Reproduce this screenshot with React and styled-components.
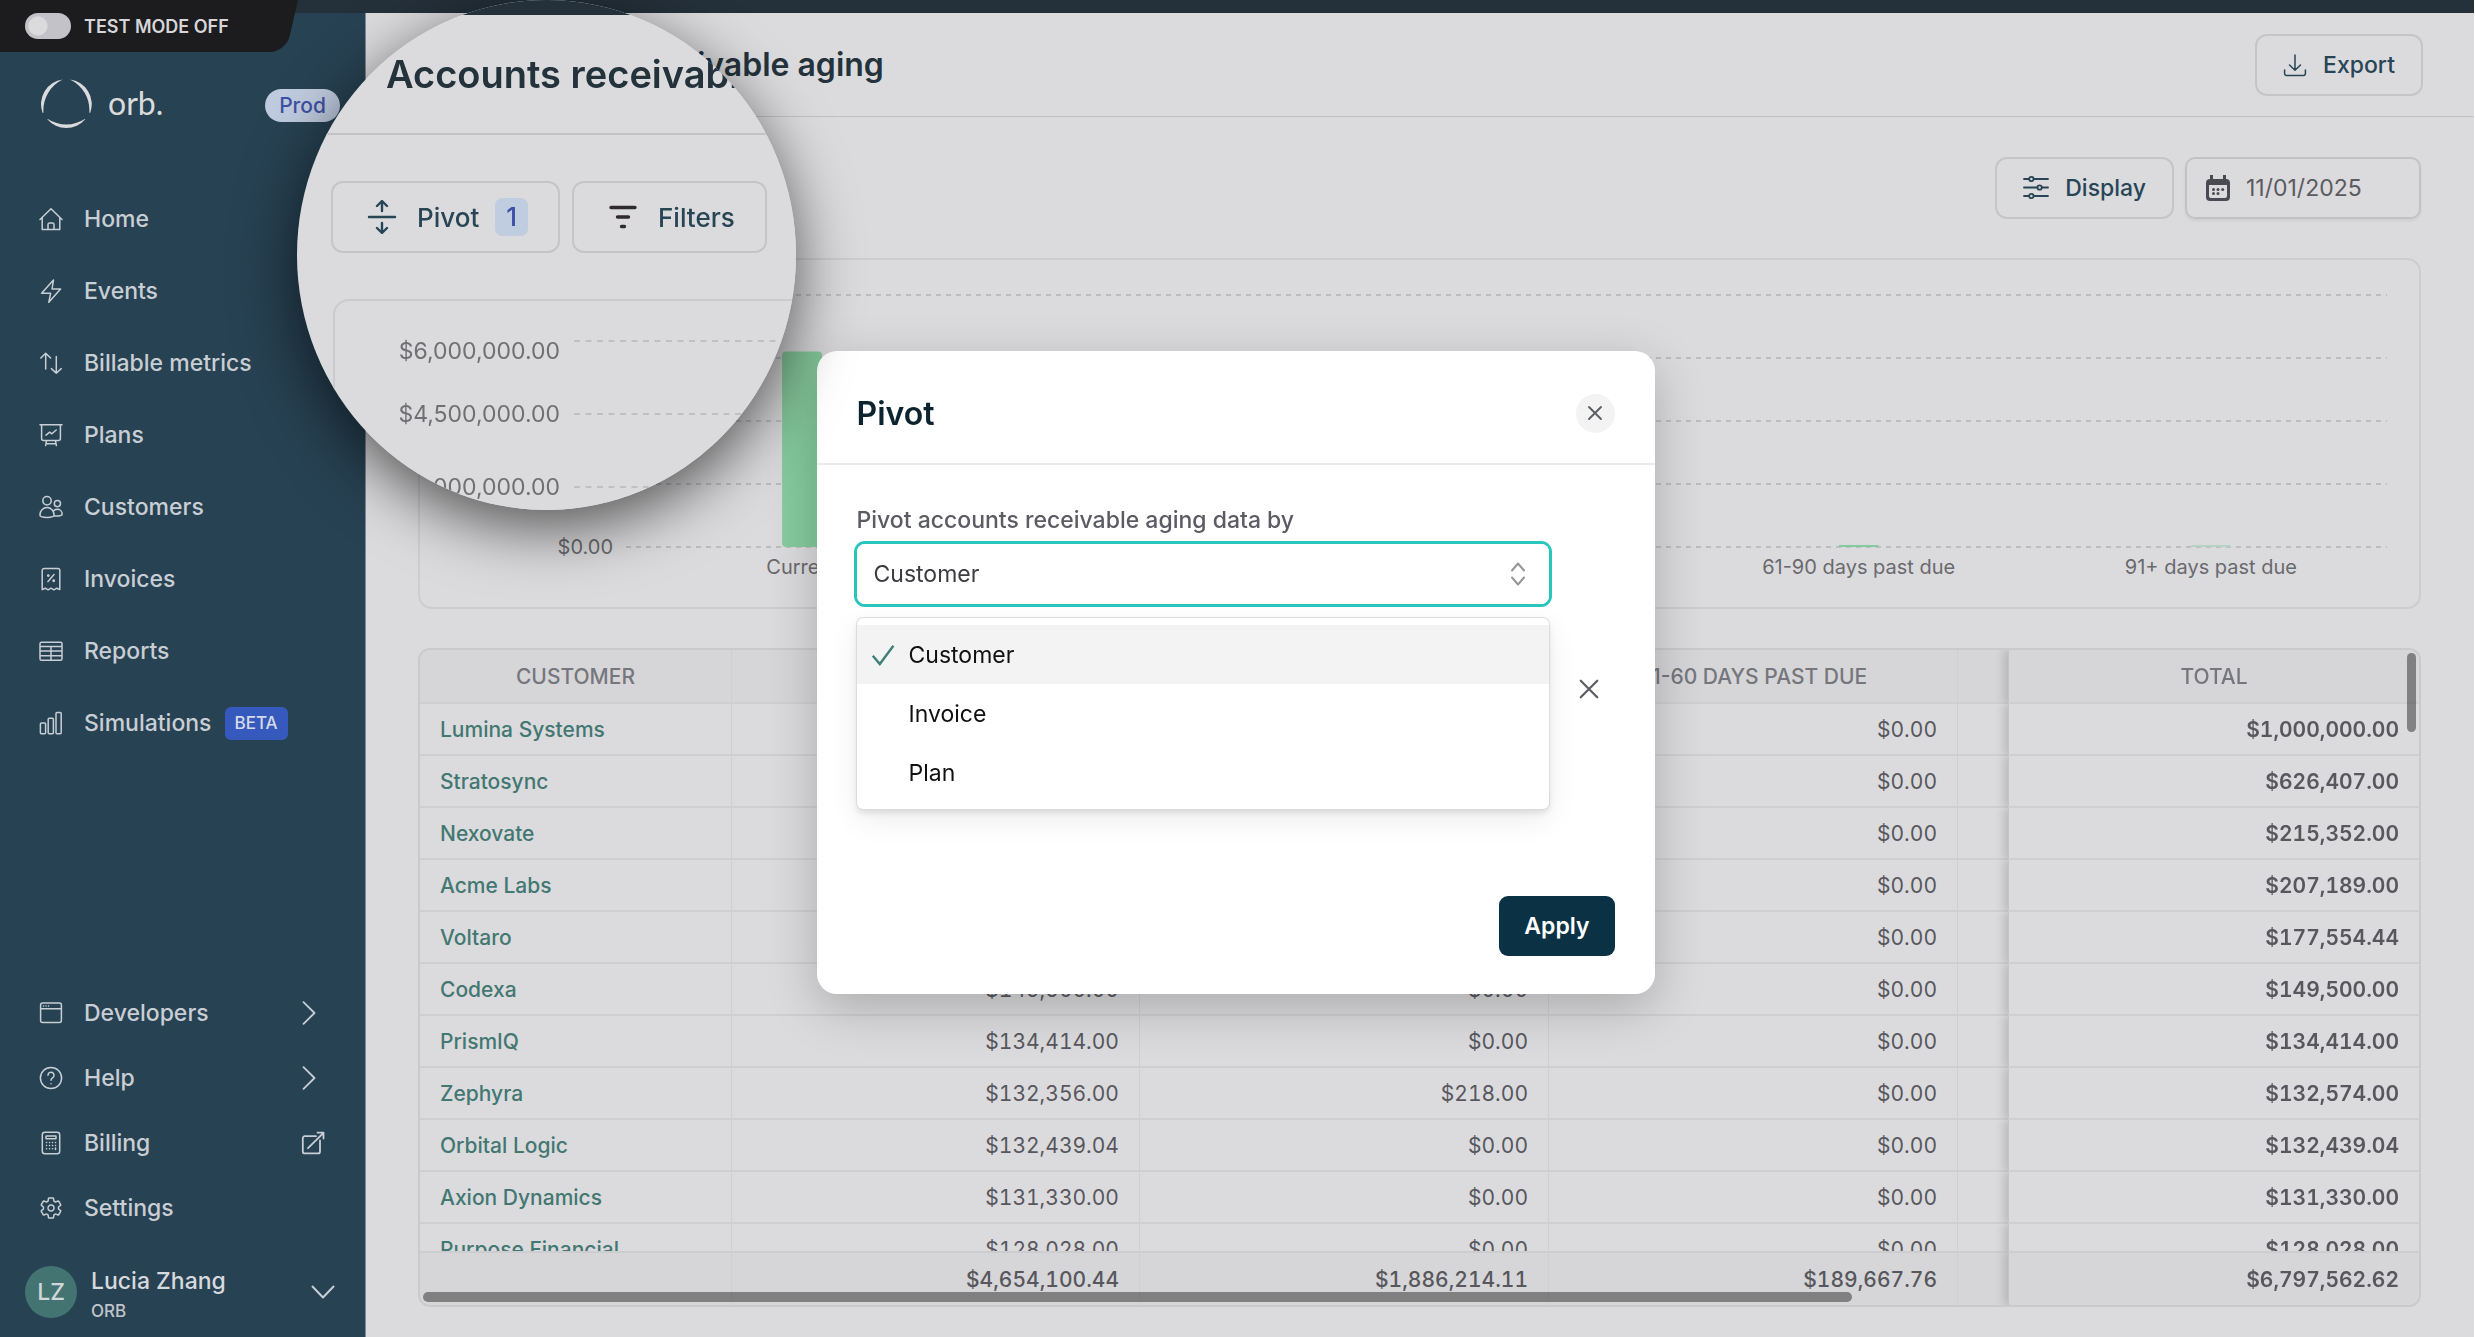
import React from 'react';
import styled, { createGlobalStyle } from 'styled-components';
import { IoSettingsOutline } from 'react-icons/io5';

const GlobalStyle = createGlobalStyle`
    * {
        box-sizing: border-box;
    }
    body {
        margin: 0;
        background: #ffffff;
        font-family: Inter, "Liberation Sans", sans-serif;
        font-size: 23px;
    }
    button, input, select {
        font: inherit;
        color: inherit;
        margin: 0;
    }
    a {
        color: inherit;
        text-decoration: none;
    }
`

const Page = styled.div`
    position: relative;
    display: flex;
    flex-direction: column;
    height: 100vh;
    padding-right: 1px;
    overflow: hidden;
`

const TopStrip = styled.div`
    height: 13px;
    flex: none;
    background: #24303a;
`

const Body = styled.div`
    display: flex;
    flex: 1;
    min-height: 0;
`

/* ---------- sidebar ---------- */

const Sidebar = styled.aside`
    display: flex;
    flex-direction: column;
    width: 366px;
    flex: none;
    padding: 66px 0 11px;
    background: #274253;
    border-right: 1px solid #7f8b95;
    color: #c9ced4;
`

const TestMode = styled.label`
    position: absolute;
    top: 0;
    left: 0;
    z-index: 1;
    display: flex;
    align-items: center;
    gap: 13px;
    width: 298px;
    height: 52px;
    padding-left: 25px;
    overflow: hidden;
    color: #d6d6d9;
    font-size: 18px;
    font-weight: 600;
    &::before {
        content: "";
        position: absolute;
        inset: 0;
        z-index: -1;
        background: #1c1c1f;
        border-bottom-right-radius: 16px;
        transform: skewX(-13deg);
        transform-origin: top right;
        margin-left: -20px;
    }
`

const Toggle = styled.input`
    appearance: none;
    width: 46px;
    height: 26px;
    border-radius: 13px;
    background: radial-gradient(circle at 13px 13px, #dbdbdd 9px, #c2c2c8 10px);
`

const LogoRow = styled.div`
    display: flex;
    align-items: center;
    justify-content: space-between;
    height: 52px;
    padding: 0 25px 0 41px;
`

const Logo = styled.a`
    display: flex;
    align-items: center;
    gap: 15px;
    color: #dbdbdd;
    font-family: Lato, sans-serif;
    font-size: 32px;
    line-height: 40px;
    span {
        padding-bottom: 4px;
    }
`

const Prod = styled.span`
    padding: 0 14px;
    border-radius: 17px;
    background: #bfcbdf;
    color: #3f51a5;
    font-size: 21px;
    line-height: 33px;
    font-weight: 500;
`

const Nav = styled.nav`
    margin-top: ${props => props.$bottom ? 'auto' : '52px'};
`

const NavItem = styled.a`
    display: flex;
    align-items: center;
    height: ${props => props.$compact ? '65px' : '72px'};
    padding: 0 40px 0 39px;
    font-weight: 500;
    svg {
        flex: none;
    }
`

const NavText = styled.span`
    flex: ${props => props.$grow ? 1 : 'none'};
    margin-left: 21px;
`

const Beta = styled.span`
    margin-left: 13px;
    padding: 0 10px;
    border-radius: 6px;
    background: #3659bd;
    color: #d6dae6;
    font-size: 17px;
    line-height: 33px;
    font-weight: 500;
`

const User = styled.button`
    display: flex;
    align-items: center;
    gap: 14px;
    margin-top: 18px;
    padding: 0 30px 0 25px;
    border: 0;
    background: none;
    text-align: left;
`

const Avatar = styled.span`
    width: 52px;
    height: 52px;
    flex: none;
    border-radius: 50%;
    background: #447472;
    color: #d0d6d9;
    font-size: 23px;
    line-height: 52px;
    font-weight: 500;
    text-align: center;
`

const UserText = styled.span`
    display: flex;
    flex: 1;
    flex-direction: column;
    padding-top: 8px;
    color: #d6d9dd;
    font-weight: 500;
    line-height: 30px;
    small {
        color: #c0c6cc;
        font-size: 17px;
    }
`

/* ---------- main area ---------- */

const Main = styled.main`
    display: flex;
    flex: 1;
    flex-direction: column;
    min-width: 0;
    background: #dbdbdd;
`

const Header = styled.header`
    display: flex;
    align-items: center;
    justify-content: space-between;
    height: 104px;
    flex: none;
    padding: 0 51px 0 107px;
    border-bottom: 1px solid #c0c0c3;
`

const Title = styled.h1`
    margin: 0;
    color: #24323c;
    font-size: 32px;
    font-weight: 600;
`

const Content = styled.div`
    display: flex;
    flex: 1;
    flex-direction: column;
    gap: 39px;
    min-height: 0;
    padding: 40px 53px 30px 52px;
`

const Toolbar = styled.div`
    display: flex;
    align-items: center;
    gap: 11px;
`

const Spacer = styled.span`
    flex: 1;
`

const ToolButton = styled.button`
    display: flex;
    align-items: center;
    gap: ${props => props.$big ? '20px' : '16px'};
    height: ${props => props.$big ? '72px' : '62px'};
    padding: ${props => props.$big ? '0 30px 0 34px' : '0 26px'};
    border: 2px solid #c5c5c8;
    border-radius: 12px;
    background: none;
    color: #284556;
    font-size: ${props => props.$big ? '26px' : '23px'};
    font-weight: 500;
`

const Count = styled.span`
    margin-left: -4px;
    padding: 0 11px;
    border-radius: 7px;
    background: #c0cce0;
    color: #3c50a8;
    line-height: 38px;
`

const DateBox = styled.label`
    display: flex;
    align-items: center;
    gap: 15px;
    width: 236px;
    height: 62px;
    padding: 0 18px;
    border: 2px solid #c2c2c5;
    border-radius: 10px;
    box-shadow: 0 2px 3px rgba(0, 0, 0, 0.06);
    color: #4a4a52;
    svg {
        flex: none;
    }
    input {
        width: 100%;
        min-width: 0;
        padding: 0;
        border: 0;
        outline: 0;
        background: none;
        color: #5a5a60;
    }
`

const ChartCard = styled.section`
    display: flex;
    height: 351px;
    flex: none;
    gap: 13px;
    padding: 34px 32px 0 20px;
    border: 2px solid #cdcdd0;
    border-radius: 14px;
    color: #6a6a6e;
    font-size: 20px;
`

const YAxis = styled.div`
    display: flex;
    flex-direction: column;
    justify-content: space-between;
    width: 173px;
    height: 276px;
    margin-top: -11px;
    line-height: 24px;
    text-align: right;
`

const Plot = styled.div`
    flex: 1;
    min-width: 0;
    svg {
        display: block;
        width: 100%;
        height: 254px;
    }
`

const XAxis = styled.div`
    display: grid;
    grid-template-columns: repeat(5, 1fr);
    margin-top: 7px;
    line-height: 24px;
    text-align: center;
`

const TableCard = styled.section`
    position: relative;
    flex: 1;
    min-height: 0;
    border: 2px solid #cacacd;
    border-radius: 12px;
    overflow: hidden;
`

const Scroller = styled.div`
    height: 100%;
    overflow: auto;
    scrollbar-width: none;
`

const Thumb = styled.span`
    position: absolute;
    border-radius: 5px;
    background: rgba(70, 70, 72, 0.6);
    z-index: 3;
    ${props => props.$vertical
        ? 'top: 3px; right: 3px; width: 9px; height: 79px;'
        : 'left: 3px; bottom: 3px; width: 71.5%; height: 10px;'}
`

const Table = styled.table`
    width: 2767px;
    table-layout: fixed;
    border-collapse: separate;
    border-spacing: 0;
    font-size: 21px;
    font-variant-numeric: tabular-nums;
    color: #57575d;
    th, td {
        height: 52px;
        padding: 0 20px;
        border-right: 1px solid #cecfd1;
        border-bottom: 2px solid #cfcfd2;
        text-align: right;
        white-space: nowrap;
    }
    th {
        font-weight: 500;
    }
    thead th {
        position: sticky;
        top: 0;
        z-index: 1;
        height: 54px;
        background: #d6d6d8;
        color: #76767d;
        font-variant-numeric: normal;
        text-align: center;
    }
    tbody th {
        text-align: left;
        color: #437772;
    }
    tfoot td {
        position: sticky;
        bottom: 0;
        z-index: 1;
        height: 54px;
        border-top: 2px solid #cdcdd0;
        border-bottom: 0;
        background: #d6d6d8;
        font-weight: 500;
    }
    tr > :last-child {
        position: sticky;
        right: 0;
        border-right: 0;
        border-left: 1px solid #c4c4c7;
        background: #dbdbdd;
        box-shadow: -4px 0 9px rgba(0, 0, 0, 0.16);
        clip-path: inset(0 0 0 -14px);
        font-weight: 600;
    }
    thead tr > :last-child, tfoot tr > :last-child {
        z-index: 2;
        background: #d6d6d8;
    }
    thead tr > :last-child {
        font-weight: 500;
    }
`

/* ---------- magnifier ---------- */

const Lens = styled.div`
    position: absolute;
    top: 0;
    left: 297px;
    z-index: 20;
    width: 499px;
    height: 510px;
    border-radius: 50%;
    overflow: hidden;
    background: #dbdbdd;
`

const LensShadow = styled(Lens)`
    background: none;
    box-shadow: 0 18px 62px rgba(0, 0, 0, 0.62);
`

const LensStrip = styled.div`
    height: 15px;
    background: #24303a;
`

const LensHeader = styled.div`
    display: flex;
    align-items: center;
    height: 120px;
    padding-left: 89px;
    border-bottom: 2px solid #c3c3c6;
    color: #24323c;
    font-size: 38px;
    font-weight: 600;
    white-space: nowrap;
`

const LensToolbar = styled.div`
    display: flex;
    gap: 12px;
    padding: 46px 30px 46px 34px;
`

const LensCard = styled.div`
    display: grid;
    grid-template-columns: 225px 1fr;
    column-gap: 14px;
    width: 600px;
    height: 400px;
    margin-left: 36px;
    padding-top: 37px;
    border: 2px solid #cbcbce;
    border-radius: 16px;
    color: #707074;
    text-align: right;
`

const LensAxis = styled.div`
    display: grid;
    grid-template-rows: 63px 73px 40px;
    align-items: start;
    line-height: 26px;
`

/* ---------- modal ---------- */

const Overlay = styled.div`
    position: fixed;
    inset: 0;
    z-index: 10;
    display: grid;
    place-items: center;
    padding: 8px 4px 0 0;
`

const Modal = styled.div`
    width: 838px;
    border-radius: 20px;
    background: #ffffff;
    box-shadow: 0 14px 50px rgba(0, 0, 0, 0.22);
`

const ModalHeader = styled.div`
    display: flex;
    align-items: center;
    justify-content: space-between;
    height: 114px;
    padding: 12px 40px 0;
    border-bottom: 2px solid #ebebec;
    h2 {
        margin: 0;
        color: #0c2330;
        font-size: 32px;
        font-weight: 600;
    }
`

const IconButton = styled.button`
    display: grid;
    place-items: center;
    width: 39px;
    height: 39px;
    padding: 0;
    border: 0;
    border-radius: 50%;
    background: ${props => props.$filled ? '#f3f3f3' : 'none'};
    color: #5c5c64;
`

const ModalBody = styled.div`
    padding: 42px 40px 38px;
`

const PivotRow = styled.div`
    display: flex;
    align-items: center;
    gap: 21px;
    height: 364px;
    padding-right: 6px;
`

const Field = styled.div`
    position: relative;
    align-self: flex-start;
    flex: 1;
    label {
        display: block;
        margin-bottom: 10px;
        color: #5b5b63;
        font-weight: 500;
        line-height: 27px;
    }
`

const SelectBox = styled.div`
    display: grid;
    align-items: center;
    border-radius: 8px;
    box-shadow: 0 0 0 3px #29c6bd;
    select {
        grid-area: 1 / 1;
        appearance: none;
        width: 100%;
        height: 60px;
        padding: 0 17px;
        border: 0;
        border-radius: 8px;
        outline: 0;
        background: #ffffff;
        color: #3b3b40;
    }
    svg {
        grid-area: 1 / 1;
        justify-self: end;
        margin-right: 19px;
        pointer-events: none;
        color: #96969c;
    }
`

const Menu = styled.ul`
    position: absolute;
    top: 111px;
    left: 0;
    right: 0;
    margin: 0;
    padding: 7px 0;
    border-radius: 6px;
    background: #ffffff;
    box-shadow: 0 0 0 1px #dcdcde, 0 4px 6px rgba(0, 0, 0, 0.1), 0 10px 30px rgba(0, 0, 0, 0.08);
    list-style: none;
`

const Option = styled.li`
    display: flex;
    align-items: center;
    height: 59px;
    padding-left: ${props => props.$active ? '14px' : '52px'};
    gap: 14px;
    background: ${props => props.$active ? '#f3f3f3' : 'none'};
    color: #101012;
`

const ModalFooter = styled.div`
    display: flex;
    justify-content: flex-end;
    margin-top: 25px;
`

const Apply = styled.button`
    height: 60px;
    padding: 0 25px;
    border: 0;
    border-radius: 9px;
    background: #0b3244;
    color: #ffffff;
    font-weight: 600;
`

/* ---------- icons ---------- */

const Icon = ({ size = 24, box = 24, width = 1.5, children }) => (
    <svg width={size} height={size} viewBox={`0 0 ${box} ${box}`} fill="none" stroke="currentColor"
        strokeWidth={width} strokeLinecap="round" strokeLinejoin="round" aria-hidden="true">
        {children}
    </svg>
)

const icons = {
    home: <path d="M1 12.5L12 1.8l11 10.7M3.2 10.5v12h17.6v-12M9 22.5v-5a1.6 1.6 0 0 1 1.6-1.6h2.8a1.6 1.6 0 0 1 1.6 1.6v5" />,
    events: <path d="M14.5 1L2.6 14.3h9L9.8 23.3 21.6 10H13z" />,
    metrics: <path d="M6.7 18V2.3M1.8 7l4.9-4.7L11.6 7M17.3 5.5v16.8M12.4 17.6l4.9 4.7 4.9-4.7" />,
    plans: <path d="M1 1.8h22M2.6 1.8v13.7a2 2 0 0 0 2 2h14.8a2 2 0 0 0 2-2V1.8M7 12.2l3.7-3 2.2 1.6L17.2 7M7.6 17.5L6.6 22.6M16.4 17.5l1 5.1M7 20.8h10" />,
    customers: (
        <>
            <circle cx="8" cy="5.8" r="4.2" />
            <circle cx="18.4" cy="8.6" r="3.1" />
            <path d="M.9 20c0-4.3 3.1-7.4 7.1-7.4s7.1 3.1 7.1 7.4c0 1.7-3.6 2.4-7.1 2.4S.9 21.7.9 20zM14 16.2c1.2-1.3 2.7-1.9 4.4-1.9 2.7 0 4.8 2 4.8 5.1 0 1.4-3.8 1.9-8 1.5" />
        </>
    ),
    invoices: (
        <>
            <path d="M3.2 22.6V3.4a2 2 0 0 1 2-2h13.6a2 2 0 0 1 2 2v19.2l-3-1.4-2.9 1.6-2.9-1.6-2.9 1.6-2.9-1.6zM9 14.6l6-7" />
            <circle cx="9.3" cy="8.6" r=".7" />
            <circle cx="14.7" cy="13.8" r=".7" />
        </>
    ),
    reports: <path d="M2.5 3.3h19a1.5 1.5 0 0 1 1.5 1.5v15a1.5 1.5 0 0 1-1.5 1.5h-19A1.5 1.5 0 0 1 1 19.8v-15a1.5 1.5 0 0 1 1.5-1.5zM1 7.6h22M1 12.1h22M1 16.7h22M12 7.6v13.7" />,
    simulations: (
        <>
            <rect x="1.4" y="12" width="5.2" height="10.7" rx="1" />
            <rect x="9.2" y="7.2" width="5.2" height="15.5" rx="1" />
            <rect x="17" y="1.5" width="5.2" height="21.2" rx="1" />
        </>
    ),
    developers: (
        <>
            <rect x="1.6" y="2" width="20.8" height="19.6" rx="2" />
            <path d="M1.6 7.7h20.8M4.5 5h.1M7 5h.1M9.5 5h.1" />
        </>
    ),
    help: (
        <>
            <circle cx="12" cy="12" r="10.6" />
            <path d="M9 9.200a3 3 0 1 1 4.8 2.4c-1.100.8-1.8 1.4-1.8 2.7M12 17.7v.1" />
        </>
    ),
    billing: (
        <>
            <rect x="3.3" y="1.3" width="17.4" height="21.4" rx="2.5" />
            <rect x="7" y="5" width="10" height="2.8" rx=".5" />
            <path d="M7.5 11.5h.1M10.5 11.5h.1M13.5 11.5h.1M16.5 11.5h.1M7.5 14.5h.1M10.5 14.5h.1M13.5 14.5h.1M16.5 14.5h.1M7.5 17.8h.1M10.5 17.8h.1M13.5 17.8h.1M16.5 17v1.5" />
        </>
    ),
    external: <path d="M15 5.2H3.8a2 2 0 0 0-2 2v13.2a2 2 0 0 0 2 2H17a2 2 0 0 0 2-2V9.5M7 17.2L22.5 1.8M16.5 1.6h6v6" />,
    download: <path d="M12 2v15M6.5 12l5.5 5.3 5.5-5.3M1.6 17v3.5a2 2 0 0 0 2 2h16.8a2 2 0 0 0 2-2V17" />,
    display: (
        <>
            <path d="M1 4h5.2M10.6 4H25M1 12.5h13.4M18.8 12.5H25M1 21h5.2M10.6 21H25" />
            <circle cx="8.4" cy="4" r="2.2" />
            <circle cx="16.6" cy="12.5" r="2.2" />
            <circle cx="8.4" cy="21" r="2.2" />
        </>
    ),
    right: <path d="M2.5 1.2l11 10.8-11 10.8" />,
    down: <path d="M1.500 6.500L12 17.500 22.500 6.500" />,
    close: <path d="M3 3l18 18M21 3L3 21" />,
    check: <path d="M1.8 12.8l7 8.2L22.4 2.8" />,
    updown: <path d="M6 8.500l6-7 6 7M6 15.500l6 7 6-7" />,
}

const CalendarIcon = () => (
    <svg width="26" height="28" viewBox="0 0 26 28" fill="currentColor" aria-hidden="true">
        <path fillRule="evenodd" d="M5 1h3v4h10V1h3v4a4 4 0 0 1 4 4v14a4 4 0 0 1-4 4H5a4 4 0 0 1-4-4V9a4 4 0 0 1 4-4zM4 11v11a2 2 0 0 0 2 2h14a2 2 0 0 0 2-2V11z" />
        <circle cx="8.5" cy="15.5" r="1.5" />
        <circle cx="13" cy="15.5" r="1.5" />
        <circle cx="17.7" cy="15.5" r="1.5" />
        <circle cx="8.5" cy="19.6" r="1.5" />
        <circle cx="13" cy="19.6" r="1.5" />
    </svg>
)

const OrbMark = () => (
    <svg width="52" height="52" viewBox="0 0 52 52" fill="currentColor" aria-hidden="true">
        <path d="M21.7.5A25 25 0 0 0 1.500 33.700h1A34 34 0 0 1 21.700.500z" />
        <path d="M29 .5a25 25 0 0 1 20.300 33.200h-1A34 34 0 0 0 29 .5z" />
        <path d="M6.300 40.300a25 25 0 0 0 38 0l-.5-.300a34 34 0 0 1-37 0z" />
    </svg>
)

const PivotIcon = () => (
    <svg width="30" height="34" viewBox="2 0 30 34" fill="none" stroke="currentColor"
        strokeWidth="2.4" strokeLinecap="round" strokeLinejoin="round" aria-hidden="true">
        <path d="M4 17h26M17 11V1.500M12 6l5-5 5 5M17 23v9.500M12 28l5 5 5-5" />
    </svg>
)

const FilterIcon = () => (
    <svg width="30" height="30" viewBox="0 0 30 30" stroke="#2f2a2e" strokeWidth="3.4" strokeLinecap="round" aria-hidden="true">
        <path d="M3 5.500h24M9.500 15h11M13.500 24.500h3" />
    </svg>
)

/* ---------- data ---------- */

const menu = [
    { icon: 'home', text: 'Home' },
    { icon: 'events', text: 'Events' },
    { icon: 'metrics', text: 'Billable metrics' },
    { icon: 'plans', text: 'Plans' },
    { icon: 'customers', text: 'Customers' },
    { icon: 'invoices', text: 'Invoices' },
    { icon: 'reports', text: 'Reports' },
    { icon: 'simulations', text: 'Simulations', beta: true },
]

const bottomMenu = [
    { icon: 'developers', text: 'Developers', end: 'right' },
    { icon: 'help', text: 'Help', end: 'right' },
    { icon: 'billing', text: 'Billing', end: 'external' },
    { text: 'Settings' },
]

const buckets = [
    { label: 'Current', value: 4654100 },
    { label: '1-30 days past due', value: 1886214 },
    { label: '31-60 days past due', value: 189667 },
    { label: '61-90 days past due', value: 48000 },
    { label: '91+ days past due', value: 22000, faint: true },
]

const rows = [
    ['Lumina Systems', '$1,000,000.00', '$0.00', '$1,000,000.00'],
    ['Stratosync', '$626,407.00', '$0.00', '$626,407.00'],
    ['Nexovate', '$215,352.00', '$0.00', '$215,352.00'],
    ['Acme Labs', '$207,189.00', '$0.00', '$207,189.00'],
    ['Voltaro', '$177,554.44', '$0.00', '$177,554.44'],
    ['Codexa', '$149,500.00', '$0.00', '$149,500.00'],
    ['PrismIQ', '$134,414.00', '$0.00', '$134,414.00'],
    ['Zephyra', '$132,356.00', '$218.00', '$132,574.00'],
    ['Orbital Logic', '$132,439.04', '$0.00', '$132,439.04'],
    ['Axion Dynamics', '$131,330.00', '$0.00', '$131,330.00'],
    ['Purpose Financial', '$128,028.00', '$0.00', '$128,028.00'],
]

/* ---------- parts ---------- */

const barTop = value => 253 - Math.max(2, value / 6000000 * 252)

const Chart = () => (
    <ChartCard>
        <YAxis>
            <span>$6,000,000.00</span>
            <span>$4,500,000.00</span>
            <span>$3,000,000.00</span>
            <span>$1,500,000.00</span>
            <span>$0.00</span>
        </YAxis>
        <Plot>
            <svg role="img" aria-label="Accounts receivable by age">
                {[1, 64, 127, 190, 253].map(y => (
                    <line key={y} x1="0" x2="100%" y1={y} y2={y} stroke="#bdbdc0" strokeWidth="2" strokeDasharray="5 5" />
                ))}
                {buckets.map((b, i) => (
                    <svg key={b.label} x={`${10 + i * 20}%`} y="0" overflow="visible">
                        <rect x="-20" y={barTop(b.value)} width="40" height={253 - barTop(b.value)}
                            rx={b.value > 1000000 ? 4 : 1} fill={b.faint ? '#b4d3c0' : '#86cb9e'} />
                    </svg>
                ))}
            </svg>
            <XAxis>
                {buckets.map(b => <span key={b.label}>{b.label}</span>)}
            </XAxis>
        </Plot>
    </ChartCard>
)

const AgingTable = () => (
    <TableCard>
        <Scroller>
            <Table>
                <colgroup>
                    <col width="312" />
                    <col width="408" />
                    <col width="409" />
                    <col width="409" />
                    <col width="409" />
                    <col width="409" />
                    <col width="411" />
                </colgroup>
                <thead>
                    <tr>
                        <th>CUSTOMER</th>
                        <th>CURRENT</th>
                        <th>1-30 DAYS PAST DUE</th>
                        <th>31-60 DAYS PAST DUE</th>
                        <th></th>
                        <th></th>
                        <th>TOTAL</th>
                    </tr>
                </thead>
                <tbody>
                    {rows.map(([name, current, late, total]) => (
                        <tr key={name}>
                            <th><a href="#customer">{name}</a></th>
                            <td>{current}</td>
                            <td>{late}</td>
                            <td>$0.00</td>
                            <td></td>
                            <td></td>
                            <td>{total}</td>
                        </tr>
                    ))}
                </tbody>
                <tfoot>
                    <tr>
                        <td></td>
                        <td>$4,654,100.44</td>
                        <td>$1,886,214.11</td>
                        <td>$189,667.76</td>
                        <td></td>
                        <td></td>
                        <td>$6,797,562.62</td>
                    </tr>
                </tfoot>
            </Table>
        </Scroller>
        <Thumb $vertical />
        <Thumb />
    </TableCard>
)

const Magnifier = () => (
    <>
        <LensShadow />
        <Lens>
            <LensStrip />
            <LensHeader>Accounts receivable aging</LensHeader>
            <LensToolbar>
                <ToolButton $big><PivotIcon />Pivot<Count>1</Count></ToolButton>
                <ToolButton $big><FilterIcon />Filters</ToolButton>
            </LensToolbar>
            <LensCard>
                <LensAxis>
                    <span>$6,000,000.00</span>
                    <span>$4,500,000.00</span>
                    <span>$3,000,000.00</span>
                </LensAxis>
                <svg width="100%" height="200" aria-hidden="true">
                    {[3, 76, 149].map(y => (
                        <line key={y} x1="0" x2="100%" y1={y} y2={y} stroke="#c0c0c3" strokeWidth="2" strokeDasharray="6 5.5" />
                    ))}
                </svg>
            </LensCard>
        </Lens>
    </>
)

class PivotModal extends React.Component {
    constructor(props){
        super(props);
        this.state = {
            pivot: 'Customer'
        }
    }

    changePivot = (pivot) => {
        this.setState({ pivot });
    }

    render(){
        const options = ['Customer', 'Invoice', 'Plan'];

        return (
            <Overlay>
                <Modal role="dialog" aria-labelledby="pivot-title">
                    <ModalHeader>
                        <h2 id="pivot-title">Pivot</h2>
                        <IconButton $filled aria-label="Close"><Icon size={16} width={2.8}>{icons.close}</Icon></IconButton>
                    </ModalHeader>
                    <ModalBody>
                        <PivotRow>
                            <Field>
                                <label htmlFor="pivot-by">Pivot accounts receivable aging data by</label>
                                <SelectBox>
                                    <select id="pivot-by" value={this.state.pivot} onChange={e => this.changePivot(e.target.value)}>
                                        {options.map(o => <option key={o}>{o}</option>)}
                                    </select>
                                    <Icon width={2}>{icons.updown}</Icon>
                                </SelectBox>
                                <Menu role="listbox">
                                    {options.map(o => (
                                        <Option key={o} role="option" aria-selected={o === this.state.pivot}
                                            $active={o === this.state.pivot} onClick={() => this.changePivot(o)}>
                                            {o === this.state.pivot && (
                                                <svg width="24" height="24" viewBox="0 0 24 24" fill="none" stroke="#3f7f7a" strokeWidth="2.4">{icons.check}</svg>
                                            )}
                                            {o}
                                        </Option>
                                    ))}
                                </Menu>
                            </Field>
                            <IconButton aria-label="Remove pivot"><Icon size={22} width={2.4}>{icons.close}</Icon></IconButton>
                        </PivotRow>
                        <ModalFooter>
                            <Apply>Apply</Apply>
                        </ModalFooter>
                    </ModalBody>
                </Modal>
            </Overlay>
        )
    }
}

const App = () => (
    <Page>
        <GlobalStyle />
        <TopStrip />
        <TestMode>
            <Toggle type="checkbox" />
            TEST MODE OFF
        </TestMode>
        <Body>
            <Sidebar>
                <LogoRow>
                    <Logo href="#home"><OrbMark /><span>orb.</span></Logo>
                    <Prod>Prod</Prod>
                </LogoRow>
                <Nav>
                    {menu.map(item => (
                        <NavItem key={item.text} href="#menu">
                            <Icon>{icons[item.icon]}</Icon>
                            <NavText>{item.text}</NavText>
                            {item.beta && <Beta>BETA</Beta>}
                        </NavItem>
                    ))}
                </Nav>
                <Nav $bottom>
                    {bottomMenu.map(item => (
                        <NavItem key={item.text} href="#menu" $compact>
                            {item.icon ? <Icon>{icons[item.icon]}</Icon> : <IoSettingsOutline size={24} />}
                            <NavText $grow>{item.text}</NavText>
                            {item.end && <Icon width={1.8}>{icons[item.end]}</Icon>}
                        </NavItem>
                    ))}
                </Nav>
                <User>
                    <Avatar>LZ</Avatar>
                    <UserText>
                        Lucia Zhang
                        <small>ORB</small>
                    </UserText>
                    <Icon width={2}>{icons.down}</Icon>
                </User>
            </Sidebar>
            <Main>
                <Header>
                    <Title>Accounts receivable aging</Title>
                    <ToolButton><Icon>{icons.download}</Icon>Export</ToolButton>
                </Header>
                <Content>
                    <Toolbar>
                        <ToolButton>Pivot<Count>1</Count></ToolButton>
                        <ToolButton>Filters</ToolButton>
                        <Spacer />
                        <ToolButton><Icon size={26} box={26} width={1.8}>{icons.display}</Icon>Display</ToolButton>
                        <DateBox>
                            <CalendarIcon />
                            <input type="text" defaultValue="11/01/2025" aria-label="Date" />
                        </DateBox>
                    </Toolbar>
                    <Chart />
                    <AgingTable />
                </Content>
            </Main>
        </Body>
        <PivotModal />
        <Magnifier />
    </Page>
)

export default App;
